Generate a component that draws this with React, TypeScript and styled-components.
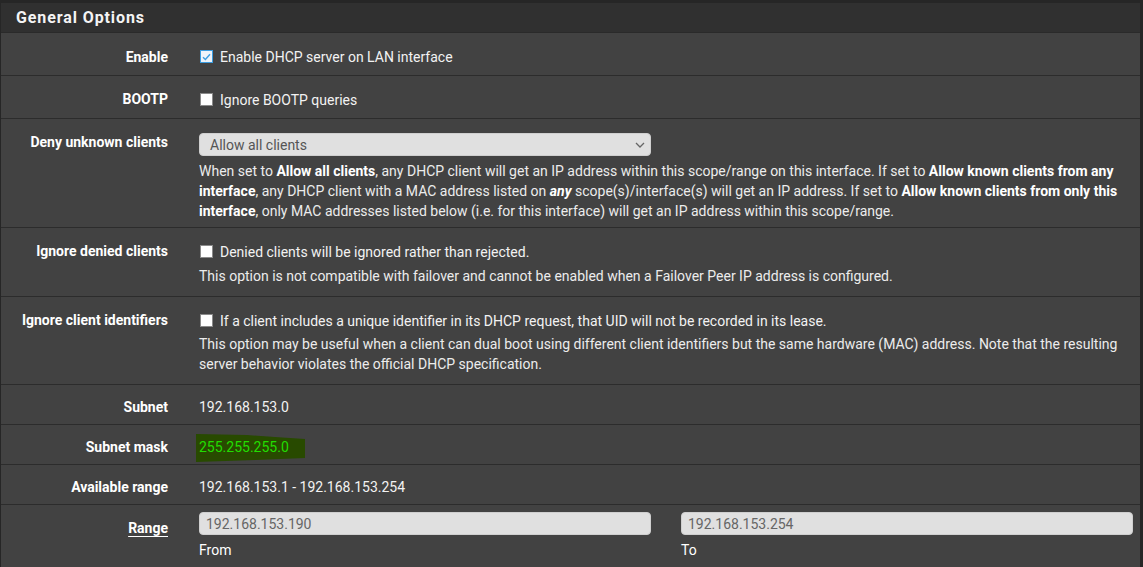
import React from 'react';
import styled, {createGlobalStyle} from 'styled-components';

const Global = createGlobalStyle`
  html, body {
    margin: 0;
    padding: 0;
    background: #262626;
  }
  body {
    font-family: Roboto, 'Liberation Sans', sans-serif;
    font-size: 14px;
    color: #f2f2f2;
  }
`;

const Page = styled.div`
  width: 1143px;
  height: 567px;
  box-sizing: border-box;
  padding: 3px 3px 0 1px;
  overflow: hidden;
`;

const Panel = styled.div`
  background: #424242;
`;

const Heading = styled.div`
  height: 29px;
  background: #303030;
  border-bottom: 1px solid #2a2a2a;
  padding-left: 15px;
  display: flex;
  align-items: center;
  font-size: 16px;
  font-weight: 700;
  letter-spacing: 0.9px;
  color: #f4f4f4;
`;

const Row = styled.div`
  display: flex;
  padding: 12px 0 7px;
  border-bottom: 1px solid #2c2c2c;
`;

const Label = styled.div<{$top?: number}>`
  width: 167px;
  flex: none;
  text-align: right;
  font-weight: 700;
  line-height: 20px;
  padding-top: ${(p) => p.$top ?? 0}px;
  color: #fff;
`;

const Underlined = styled.span`
  text-decoration: underline;
  text-underline-offset: 3px;
`;

const Content = styled.div<{$shift?: number}>`
  margin-left: 31px;
  width: 935px;
  margin-top: ${(p) => p.$shift ?? 0}px;
`;

const Text = styled.div`
  line-height: 20px;
`;

const CheckLine = styled.label`
  display: flex;
  align-items: center;
  gap: 7px;
  height: 23px;
  padding-left: 1px;
`;

const Box = styled.span<{$on?: boolean}>`
  width: 11px;
  height: 11px;
  flex: none;
  border: 1px solid ${(p) => (p.$on ? '#3c9de0' : '#8a8a8a')};
  background: ${(p) => (p.$on ? '#eef4fa' : '#ffffff')};
  display: flex;
  align-items: center;
  justify-content: center;
`;

const Help = styled.div<{$gap?: number; $end?: number}>`
  line-height: 20px;
  margin: ${(p) => p.$gap ?? 3}px 0 ${(p) => p.$end ?? 3}px;
  color: #ececec;
  b { font-weight: 700; color: #fff; }
`;

const SelectBox = styled.div`
  width: 452px;
  height: 23px;
  margin-top: 2px;
  box-sizing: border-box;
  background: #e0e0e0;
  border: 1px solid #cfcfcf;
  border-radius: 4px;
  display: flex;
  align-items: center;
  justify-content: space-between;
  padding: 0 5px 0 10px;
  color: #555;
`;

const Mask = styled.span`
  position: relative;
  display: inline-block;
  vertical-align: top;
  line-height: 20px;
  color: #22dd00;
  svg {
    position: absolute;
    left: -4px;
    top: -3px;
    z-index: 0;
  }
  span {
    position: relative;
    z-index: 1;
  }
`;

const Pair = styled.div`
  display: grid;
  grid-template-columns: 452px 452px;
  column-gap: 30px;
`;

const Field = styled.div`
  display: flex;
  flex-direction: column;
`;

const Input = styled.div`
  height: 23px;
  box-sizing: border-box;
  background: #e0e0e0;
  border: 1px solid #cfcfcf;
  border-radius: 4px;
  display: flex;
  align-items: center;
  padding-left: 6px;
  font-size: 14px;
  color: #666;
`;

const Caption = styled.div`
  line-height: 20px;
  margin-top: 5px;
  color: #fff;
`;

const Check: React.FC<{on?: boolean; children: React.ReactNode}> = ({on, children}) => (
  <CheckLine>
    <Box $on={on}>
      {on && (
        <svg width="9" height="8" viewBox="0 0 9 8">
          <path d="M1 4.2 L3.4 6.5 L8 1.2" fill="none" stroke="#3c9de0" strokeWidth="1.4" />
        </svg>
      )}
    </Box>
    {children}
  </CheckLine>
);

export default function App() {
  return (
    <Page>
      <Global />
      <Panel>
        <Heading>General Options</Heading>

        <Row>
          <Label $top={2}>Enable</Label>
          <Content>
            <Check on>Enable DHCP server on LAN interface</Check>
          </Content>
        </Row>

        <Row>
          <Label $top={1}>BOOTP</Label>
          <Content>
            <Check>Ignore BOOTP queries</Check>
          </Content>
        </Row>

        <Row>
          <Label $top={1}>Deny unknown clients</Label>
          <Content>
            <SelectBox>
              Allow all clients
              <svg width="10" height="6" viewBox="0 0 10 6">
                <path d="M1 1 L5 5 L9 1" fill="none" stroke="#666" strokeWidth="1.3" />
              </svg>
            </SelectBox>
            <Help $gap={5} $end={-1}>
              When set to <b>Allow all clients</b>, any DHCP client will get an IP address within this scope/range on this
              interface. If set to <b>Allow known clients from any interface</b>, any DHCP client with a MAC address listed
              on <b><i>any</i></b> scope(s)/interface(s) will get an IP address. If set to{' '}
              <b>Allow known clients from only this interface</b>, only MAC addresses listed below (i.e. for this interface)
              will get an IP address within this scope/range.
            </Help>
          </Content>
        </Row>

        <Row>
          <Label $top={1}>Ignore denied clients</Label>
          <Content>
            <Check>Denied clients will be ignored rather than rejected.</Check>
            <Help $gap={3} $end={3}>
              This option is not compatible with failover and cannot be enabled when a Failover Peer IP address is
              configured.
            </Help>
          </Content>
        </Row>

        <Row>
          <Label $top={1}>Ignore client identifiers</Label>
          <Content>
            <Check>If a client includes a unique identifier in its DHCP request, that UID will not be recorded in its lease.</Check>
            <Help $gap={2} $end={3}>
              This option may be useful when a client can dual boot using different client identifiers but the same
              hardware (MAC) address. Note that the resulting server behavior violates the official DHCP specification.
            </Help>
          </Content>
        </Row>

        <Row>
          <Label>Subnet</Label>
          <Content>
            <Text>192.168.153.0</Text>
          </Content>
        </Row>

        <Row>
          <Label>Subnet mask</Label>
          <Content>
            <Text>
              <Mask>
                <svg width="112" height="29" viewBox="0 0 112 29">
                  <polygon points="1,0 52,1 80,3 110,5 110,24 60,26 1,28" fill="#284a00" />
                </svg>
                <span>255.255.255.0</span>
              </Mask>
            </Text>
          </Content>
        </Row>

        <Row>
          <Label>Available range</Label>
          <Content>
            <Text>192.168.153.1 - 192.168.153.254</Text>
          </Content>
        </Row>

        <Row>
          <Label $top={1}>
            <Underlined>Range</Underlined>
          </Label>
          <Content $shift={-5}>
            <Pair>
              <Field>
                <Input>192.168.153.190</Input>
                <Caption>From</Caption>
              </Field>
              <Field>
                <Input>192.168.153.254</Input>
                <Caption>To</Caption>
              </Field>
            </Pair>
          </Content>
        </Row>
      </Panel>
    </Page>
  );
}
